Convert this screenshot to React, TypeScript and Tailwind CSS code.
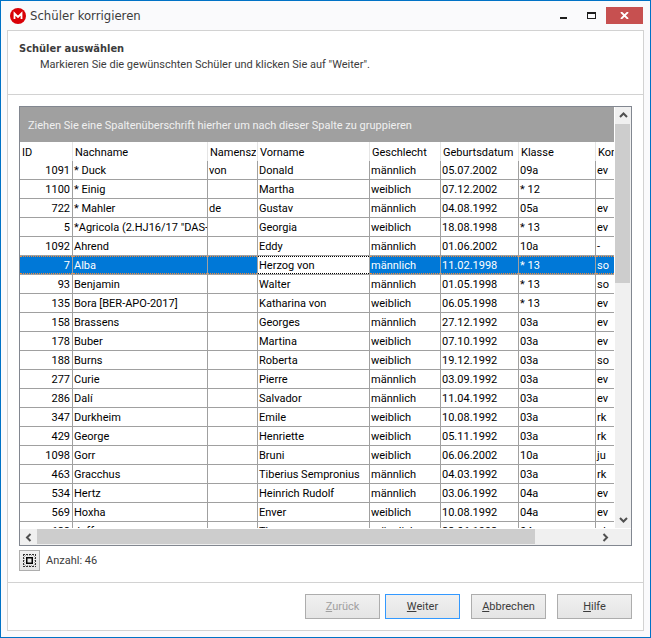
import type { ReactNode } from "react";

type Student = [string, string, string, string, string, string, string, string];

const columns = [
  "ID",
  "Nachname",
  "Namenszusatz",
  "Vorname",
  "Geschlecht",
  "Geburtsdatum",
  "Klasse",
  "Konfession",
];

const students: Student[] = [
  ["1091", "* Duck", "von", "Donald", "männlich", "05.07.2002", "09a", "ev"],
  ["1100", "* Einig", "", "Martha", "weiblich", "07.12.2002", "* 12", ""],
  ["722", "* Mahler", "de", "Gustav", "männlich", "04.08.1992", "05a", "ev"],
  ["5", '*Agricola (2.HJ16/17 "DAS-', "", "Georgia", "weiblich", "18.08.1998", "* 13", "ev"],
  ["1092", "Ahrend", "", "Eddy", "männlich", "01.06.2002", "10a", "-"],
  ["7", "Alba", "", "Herzog von", "männlich", "11.02.1998", "* 13", "so"],
  ["93", "Benjamin", "", "Walter", "männlich", "01.05.1998", "* 13", "so"],
  ["135", "Bora [BER-APO-2017]", "", "Katharina von", "weiblich", "06.05.1998", "* 13", "ev"],
  ["158", "Brassens", "", "Georges", "männlich", "27.12.1992", "03a", "ev"],
  ["178", "Buber", "", "Martina", "weiblich", "07.10.1992", "03a", "ev"],
  ["188", "Burns", "", "Roberta", "weiblich", "19.12.1992", "03a", "so"],
  ["277", "Curie", "", "Pierre", "männlich", "03.09.1992", "03a", "ev"],
  ["286", "Dalí", "", "Salvador", "männlich", "11.04.1992", "03a", "ev"],
  ["347", "Durkheim", "", "Emile", "weiblich", "10.08.1992", "03a", "rk"],
  ["429", "George", "", "Henriette", "weiblich", "05.11.1992", "03a", "rk"],
  ["1098", "Gorr", "", "Bruni", "weiblich", "06.06.2002", "10a", "ju"],
  ["463", "Gracchus", "", "Tiberius Sempronius", "männlich", "04.03.1992", "03a", "rk"],
  ["534", "Hertz", "", "Heinrich Rudolf", "männlich", "03.06.1992", "04a", "ev"],
  ["569", "Hoxha", "", "Enver", "weiblich", "10.08.1992", "04a", "ev"],
  ["638", "Joffe", "", "Thomas", "männlich", "23.06.1992", "04a", "ob"],
];

const selectedId = "7";

function Chevron({ d }: { d: string }) {
  return (
    <svg width="9" height="9" viewBox="0 0 9 9" fill="none" stroke="#505050" strokeWidth="2" aria-hidden="true">
      <path d={d} />
    </svg>
  );
}

function ScrollArrow({ label, d }: { label: string; d: string }) {
  return (
    <button type="button" aria-label={label} className="flex size-[17px] shrink-0 items-center justify-center">
      <Chevron d={d} />
    </button>
  );
}

function DialogButton({ children, variant = "border-[#adadad]", disabled = false }: { children: ReactNode; variant?: string; disabled?: boolean }) {
  return (
    <button
      type="button"
      disabled={disabled}
      className={`h-[25px] w-[75px] border bg-linear-to-b from-[#f0f0f0] to-[#e5e5e5] pt-0.5 text-[#3c3c3c] disabled:text-[#a0a0a0] ${variant}`}
    >
      {children}
    </button>
  );
}

function StudentRow({ student }: { student: Student }) {
  const selected = student[0] === selectedId;
  return (
    <tr className={selected ? "h-[19px] bg-[#0078d7] text-white" : "h-[19px]"} aria-selected={selected}>
      {student.map((value, i) => {
        const align = i === 0 ? "pr-0.5 pl-0 text-right" : "px-0 text-left";
        const focused = selected && i === 3;
        const state = focused ? "bg-white text-black" : "";
        const dots = focused ? "border-black" : "border-[#f08a3c]";
        return (
          <td key={columns[i]} className="overflow-hidden border-r border-b border-[#a0a0a0] p-0 whitespace-nowrap">
            <div className={selected ? `h-[18px] border-y border-dotted leading-[17px] ${dots} ${align} ${state}` : `h-[18px] leading-[19px] ${align}`}>
              <span className="pl-px">{value}</span>
            </div>
          </td>
        );
      })}
    </tr>
  );
}

export default function App() {
  return (
    <div className="flex h-screen flex-col border border-[#0072c6] bg-[#fafafc] px-1.5 pb-1.5 font-[Roboto,'DejaVu_Sans_Condensed',sans-serif] text-[11px] text-black">
      <header className="flex h-[29px] shrink-0 items-center gap-1 pr-px pl-[3px]">
        <svg width="16" height="16" viewBox="0 0 16 16" aria-hidden="true">
          <circle cx="8" cy="8" r="8" fill="#d90007" />
          <path d="M4.5 11V5.5L8 9l3.500-3.500V11" fill="none" stroke="#fff" strokeWidth="1.800" />
        </svg>
        <h1 className="flex-1 font-['DejaVu_Sans_Condensed','DejaVu_Sans',sans-serif] text-[13px] text-[#3c3c3c]">Schüler korrigieren</h1>
        <button type="button" aria-label="Minimieren" className="flex h-[17px] w-[27px] items-center justify-center">
          <svg width="9" height="9" viewBox="0 0 9 9" aria-hidden="true"><path d="M1 6h7v2H1z" fill="#1e1e1e" /></svg>
        </button>
        <button type="button" aria-label="Maximieren" className="flex h-[17px] w-[21px] items-center justify-center">
          <svg width="9" height="7" viewBox="0 0 9 7" aria-hidden="true"><path d="M0 0h9v7H0zM1 2v4h7V2z" fill="#1e1e1e" fillRule="evenodd" /></svg>
        </button>
        <button type="button" aria-label="Schließen" className="flex h-[17px] w-[37px] items-center justify-center bg-[#c75050]">
          <svg width="9" height="7" viewBox="0 0 9 7" aria-hidden="true"><path d="M1 0l7 7M8 0L1 7" stroke="#fff" strokeWidth="1.800" /></svg>
        </button>
      </header>

      <main className="flex min-h-0 flex-1 flex-col border border-[#d2d2d2] bg-white">
        <section className="h-16 shrink-0 border-b border-[#d2d2d2] px-[11px] pt-2.5 text-[#3c3c3c]">
          <h2 className="font-['DejaVu_Sans_Condensed','DejaVu_Sans',sans-serif] leading-4 font-bold">Schüler auswählen</h2>
          <p className="pl-[21px] leading-4">Markieren Sie die gewünschten Schüler und klicken Sie auf "Weiter".</p>
        </section>

        <section className="flex min-h-0 flex-1 flex-col px-[11px] py-[11px]">
          <div className="grid min-h-0 flex-1 grid-cols-[minmax(0,1fr)_17px] grid-rows-[minmax(0,1fr)_17px] border border-[#828790]">
            <div className="overflow-hidden">
              <p className="h-[35px] bg-[#a0a0a0] px-2 leading-[37px] whitespace-nowrap text-[#f0f0f0]">
                Ziehen Sie eine Spaltenüberschrift hierher um nach dieser Spalte zu gruppieren
              </p>
              <table className="w-[647px] table-fixed border-separate border-spacing-0">
                <colgroup>
                  <col className="w-[53px]" />
                  <col className="w-[135px]" />
                  <col className="w-[50px]" />
                  <col className="w-[112px]" />
                  <col className="w-[71px]" />
                  <col className="w-[78px]" />
                  <col className="w-[77px]" />
                  <col className="w-[71px]" />
                </colgroup>
                <thead>
                  <tr className="h-[19px]">
                    {columns.map((name) => (
                      <th key={name} scope="col" className="overflow-hidden border-r border-[#e5e5e5] p-0 text-left font-normal whitespace-nowrap">
                        <div className="mr-px h-[19px] overflow-hidden pl-0.5 leading-[21px]">{name}</div>
                      </th>
                    ))}
                  </tr>
                </thead>
                <tbody>
                  {students.map((student) => (
                    <StudentRow key={student[0]} student={student} />
                  ))}
                </tbody>
              </table>
            </div>
            <div className="ml-px flex flex-col items-stretch bg-[#f0f0f0]">
              <ScrollArrow label="Nach oben" d="M1 6l3.500-3.500L8 6" />
              <div className="flex-1">
                <div className="h-[41%] w-[15px] bg-[#cdcdcd]" />
              </div>
              <ScrollArrow label="Nach unten" d="M1 3l3.500 3.500L8 3" />
            </div>
            <div className="mt-px flex bg-[#f0f0f0]">
              <ScrollArrow label="Nach links" d="M6.500 1L3 4.500 6.500 8" />
              <div className="flex-1">
                <div className="h-[15px] w-[89%] bg-[#cdcdcd]" />
              </div>
              <ScrollArrow label="Nach rechts" d="M2.500 1L6 4.500 2.500 8" />
            </div>
            <div className="mt-px bg-[#f0f0f0]" />
          </div>

          <div className="flex items-center gap-1.5 pt-1 text-[#3c3c3c]">
            <button type="button" aria-label="Alle markieren" className="flex size-[21px] items-center justify-center border border-[#adadad] bg-linear-to-b from-[#f0f0f0] to-[#e5e5e5]">
              <svg width="13" height="13" viewBox="0 0 13 13" fill="none" stroke="#333" aria-hidden="true">
                <path d="M0 .5h13M0 12.500h13M.5 0v13M12.500 0v13" strokeDasharray="2 1" />
                <path d="M2 1.500h9M2 11.500h9M1.500 2v9M11.500 2v9" stroke="#aaa" strokeDasharray="1 1" />
                <path d="M3 3h7v7H3zM5 5v3h3V5z" fill="#000" fillRule="evenodd" stroke="none" />
                <path d="M4.500 4.500h4v4h-4z" fill="#e8e8e8" stroke="none" />
              </svg>
            </button>
            <span className="pt-0.5">Anzahl: 46</span>
          </div>
        </section>

        <footer className="flex h-12 shrink-0 justify-end gap-[11px] border-t border-[#d2d2d2] px-[11px] pt-[11px]">
          <div className="flex gap-[5px]">
            <DialogButton disabled><u>Z</u>urück</DialogButton>
            <DialogButton variant="border-[#3399ff]"><u>W</u>eiter</DialogButton>
          </div>
          <DialogButton><u>A</u>bbrechen</DialogButton>
          <DialogButton><u>H</u>ilfe</DialogButton>
        </footer>
      </main>
    </div>
  );
}
